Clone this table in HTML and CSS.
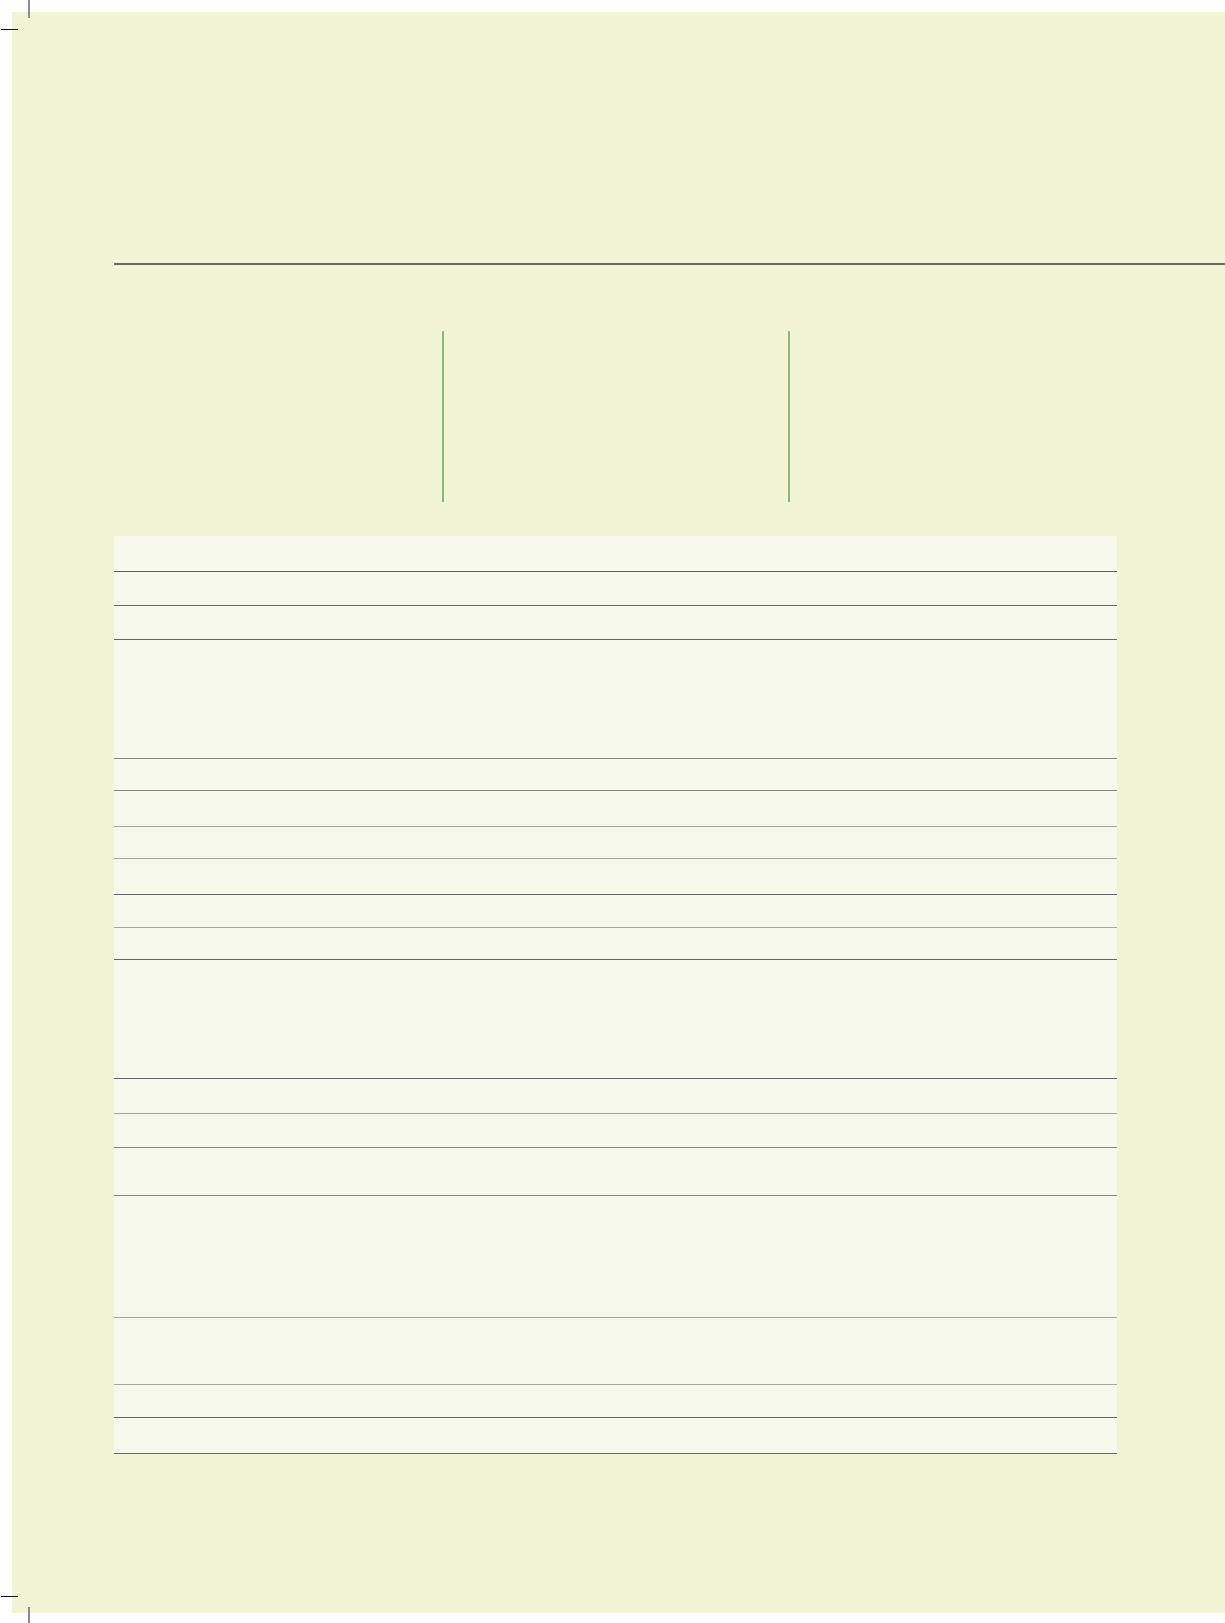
FILE: index.html
```html
<!DOCTYPE html>
<html lang="en">
<head>
<meta charset="utf-8">
<title>Sheet</title>
<link rel="stylesheet" href="styles.css">
</head>
<body>
<div class="crop crop-tl-v"></div>
<div class="crop crop-tl-h"></div>
<div class="crop crop-bl-h"></div>
<div class="crop crop-bl-v"></div>
<main class="panel">
  <hr class="rule">
  <section class="columns">
    <div class="col col-first"></div>
    <div class="col col-mid"></div>
    <div class="col col-last"></div>
  </section>
  <div class="table">
    <div class="row h35 green"></div>
    <div class="row h33 dark"></div>
    <div class="row h33 dark"></div>
    <div class="row h118 mid"></div>
    <div class="row h31 mid"></div>
    <div class="row h35 light"></div>
    <div class="row h31 light"></div>
    <div class="row h35 dark"></div>
    <div class="row h32 light"></div>
    <div class="row h31 dark"></div>
    <div class="row h118 dark"></div>
    <div class="row h34 light"></div>
    <div class="row h33 mid"></div>
    <div class="row h47 mid"></div>
    <div class="row h121 light"></div>
    <div class="row h66 light"></div>
    <div class="row h32 dark"></div>
    <div class="row h35 dark"></div>
  </div>
</main>
</body>
</html>
```

FILE: styles.css
```css
html, body {
  margin: 0;
  padding: 0;
  background: #ffffff;
  font-family: "Liberation Sans", Arial, sans-serif;
}
body {
  position: relative;
  width: 1225px;
  height: 1623px;
  overflow: hidden;
}
.panel {
  margin: 12px 0 0 12px;
  height: 1601px;
  background: #f1f5d6;
  padding-left: 102px;
  padding-top: 251px;
  box-sizing: border-box;
}
.rule {
  margin: 0;
  border: 0;
  height: 2px;
  background: #666663;
}
.columns {
  display: flex;
  margin-top: 66px;
  height: 171px;
}
.col-first { width: 328px; }
.col-mid {
  width: 344px;
  border-left: 2px solid #8fb47c;
}
.col-last {
  width: 300px;
  border-left: 2px solid #8fb47c;
}
.table {
  margin-top: 34px;
  width: 1003px;
  background: #f7f9ea;
}
.row { border-bottom: 1px solid #6a6a66; }
.row.green { border-bottom-color: #3f7a2e; }
.row.dark { border-bottom-color: #666662; }
.row.mid { border-bottom-color: #858580; }
.row.light { border-bottom-color: #a6a6a0; }
.h31 { height: 31px; }
.h32 { height: 32px; }
.h33 { height: 33px; }
.h34 { height: 34px; }
.h35 { height: 35px; }
.h47 { height: 47px; }
.h66 { height: 66px; }
.h118 { height: 118px; }
.h121 { height: 121px; }
.crop {
  position: absolute;
}
.crop-tl-v {
  left: 28px;
  top: 0;
  width: 2px;
  height: 18px;
  background: #8a8a8a;
}
.crop-tl-h {
  left: 1px;
  top: 29px;
  width: 17px;
  height: 1px;
  background: #111;
}
.crop-bl-h {
  left: 1px;
  top: 1596px;
  width: 17px;
  height: 1px;
  background: #111;
}
.crop-bl-v {
  left: 28px;
  top: 1607px;
  width: 2px;
  height: 16px;
  background: #8a8a8a;
}
```
